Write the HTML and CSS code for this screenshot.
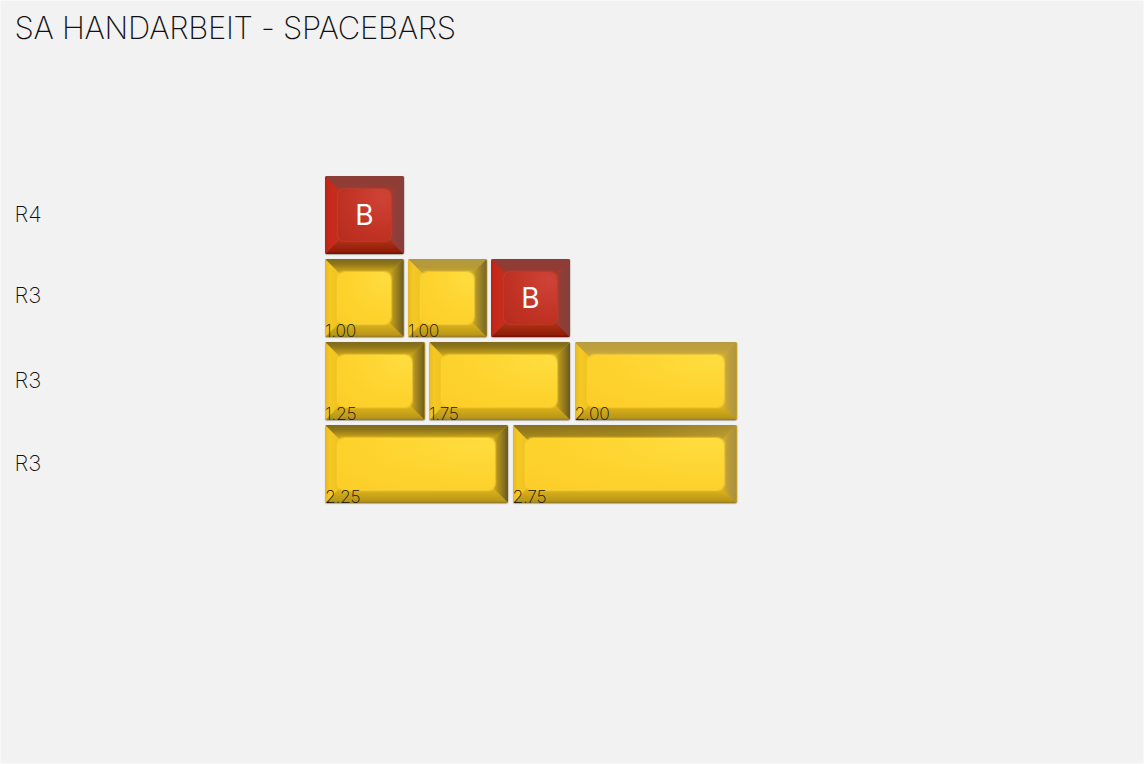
FILE: index.html
```html
<!DOCTYPE html>
<html lang="en">
<head>
<meta charset="utf-8">
<title>SA Handarbeit - Spacebars</title>
<link rel="stylesheet" href="styles.css">
</head>
<body>
<main class="page">
  <h1 class="title">SA HANDARBEIT - SPACEBARS</h1>
  <section class="rows">
    <div class="row">
      <div class="row-label">R4</div>
      <div class="keys">
        <div class="key red u100"><div class="bevels"><i class="b t"></i><i class="b r"></i><i class="b d"></i><i class="b l"></i></div><div class="cap">B</div></div>
      </div>
    </div>
    <div class="row">
      <div class="row-label row-label-high">R3</div>
      <div class="keys">
        <div class="key yellow shade u100"><div class="bevels"><i class="b t"></i><i class="b r"></i><i class="b d"></i><i class="b l"></i></div><div class="cap"></div><span class="size">1.00</span></div>
        <div class="key yellow soft u100"><div class="bevels"><i class="b t"></i><i class="b r"></i><i class="b d"></i><i class="b l"></i></div><div class="cap"></div><span class="size">1.00</span></div>
        <div class="key red u100"><div class="bevels"><i class="b t"></i><i class="b r"></i><i class="b d"></i><i class="b l"></i></div><div class="cap">B</div></div>
      </div>
    </div>
    <div class="row">
      <div class="row-label">R3</div>
      <div class="keys">
        <div class="key yellow shade u125"><div class="bevels"><i class="b t"></i><i class="b r"></i><i class="b d"></i><i class="b l"></i></div><div class="cap"></div><span class="size">1.25</span></div>
        <div class="key yellow shade u175"><div class="bevels"><i class="b t"></i><i class="b r"></i><i class="b d"></i><i class="b l"></i></div><div class="cap"></div><span class="size">1.75</span></div>
        <div class="key yellow pale u200"><div class="bevels"><i class="b t"></i><i class="b r"></i><i class="b d"></i><i class="b l"></i></div><div class="cap"></div><span class="size">2.00</span></div>
      </div>
    </div>
    <div class="row">
      <div class="row-label">R3</div>
      <div class="keys">
        <div class="key yellow shade u225"><div class="bevels"><i class="b t"></i><i class="b r"></i><i class="b d"></i><i class="b l"></i></div><div class="cap"></div><span class="size">2.25</span></div>
        <div class="key yellow mixed u275"><div class="bevels"><i class="b t"></i><i class="b r"></i><i class="b d"></i><i class="b l"></i></div><div class="cap"></div><span class="size">2.75</span></div>
      </div>
    </div>
  </section>
</main>
</body>
</html>
```
FILE: styles.css
```css
* { box-sizing: border-box; }
html, body { margin: 0; height: 100%; }
body { background: #fff; overflow: hidden; }
.page {
  width: 1144px;
  height: 764px;
  background: #f2f2f2;
  border: 1px solid #f8f8f8;
  padding: 0 13.5px;
  color: #111;
  font-family: Inter, "Liberation Sans", sans-serif;
}
.title {
  margin: 0;
  padding-top: 9px;
  height: 175px;
  font-size: 31px;
  line-height: 36px;
  font-weight: 200;
  letter-spacing: -0.3px;
}
.rows { display: flex; flex-direction: column; gap: 5px; }
.row { display: flex; align-items: center; height: 78px; }
.row-label { width: 310.5px; font-size: 22px; font-weight: 200; padding-bottom: 2px; }
.row-label-high { padding-bottom: 6px; }
.keys { display: flex; gap: 4.5px; }
.key {
  position: relative;
  height: 78px;
  border-radius: 2px;
  flex: none;
  box-shadow: 0 1px 1px rgba(60, 50, 20, .35), 1px 0 1px rgba(60, 50, 20, .15);
}
.u100 { width: 78.6px; }
.u125 { width: 99.5px; }
.u175 { width: 141px; }
.u200 { width: 162px; }
.u225 { width: 183px; }
.u275 { width: 224px; }
.yellow { background: #d4ad1a; }
.red { background: #a9301f; }
.bevels {
  position: absolute;
  inset: 0;
  overflow: hidden;
  border-radius: 2px;
}
.b { position: absolute; inset: 0; display: block; filter: blur(.5px); }
.bevels .b.t { clip-path: polygon(0 0, 100% 0, calc(100% - 20px) 20px, 20px 20px); }
.bevels .b.r { clip-path: polygon(100% 0, 100% 100%, calc(100% - 20px) calc(100% - 20px), calc(100% - 20px) 20px); }
.bevels .b.d { clip-path: polygon(0 100%, 100% 100%, calc(100% - 20px) calc(100% - 20px), 20px calc(100% - 20px)); }
.bevels .b.l { clip-path: polygon(0 0, 0 100%, 20px calc(100% - 20px), 20px 20px); }

.yellow .b.l { background: linear-gradient(90deg, #e6ba20 0, #f5c825 5px, #f0c220 14px); }
.yellow .b.d { background: linear-gradient(0deg, #8f7a28 0, #b8961a 2px, #e0b418 14px); }

.shade .b.t { background: linear-gradient(180deg, #7f6a1e 0, #8f7619 5px, #d6ae17 14px); }
.shade .b.r { background: linear-gradient(270deg, #675820 0, #8c7520 5px, #c9a519 14px); }

.soft .b.t { background: linear-gradient(180deg, #b39a40 0, #b79a36 8px, #cba92a 14px); }
.soft .b.r { background: linear-gradient(270deg, #74652a 0, #8f7a2a 5px, #c7a522 14px); }

.pale .b.t { background: linear-gradient(180deg, #b89c42 0, #c2a23c 9px, #d4b030 14px); }
.pale .b.r { background: linear-gradient(270deg, #ad9440 0, #bd9f3c 8px, #d4b02c 14px); }

.mixed .b.t { background: linear-gradient(180deg, rgba(143, 116, 25, .1), rgba(214, 174, 23, .45) 14px), linear-gradient(90deg, #846d1e 0, #8f7620 55%, #ad9238 100%); }
.mixed .b.r { background: linear-gradient(270deg, #a98f3e 0, #b79a3a 8px, #d2ae2e 14px); }

.red .b.t { background: linear-gradient(180deg, #8d3d38 0, #913c35 9px, #a03a2e 14px); }
.red .b.r { background: linear-gradient(270deg, #873e3c 0, #8f3e39 8px, #a63a2e 14px); }
.red .b.d { background: linear-gradient(0deg, #6f0c0a 0, #8f1c08 2px, #b03216 14px); }
.red .b.l { background: linear-gradient(90deg, #b8231a 0, #c8281a 5px, #c2301e 14px); }

.cap {
  position: absolute;
  inset: 13px;
  border-radius: 7px;
  display: flex;
  align-items: center;
  justify-content: center;
}
.yellow .cap {
  background: radial-gradient(ellipse at 90% 10%, #ffdc3e, #fed32e 55%, #fdcd28);
  box-shadow: 0 0 1.5px 0.5px rgba(255, 225, 80, .6);
}
.red .cap {
  background: radial-gradient(circle at 85% 15%, #cf4337, #c03223 60%, #b72c1f);
  box-shadow: 0 0 1.5px 0.5px rgba(205, 65, 45, .6);
  color: #fff;
  font-size: 28px;
  font-weight: 400;
}
.size {
  position: absolute;
  left: 0;
  bottom: -3px;
  font-size: 17.5px;
  line-height: 18px;
  font-weight: 200;
  letter-spacing: -0.3px;
  color: #111;
}
```
